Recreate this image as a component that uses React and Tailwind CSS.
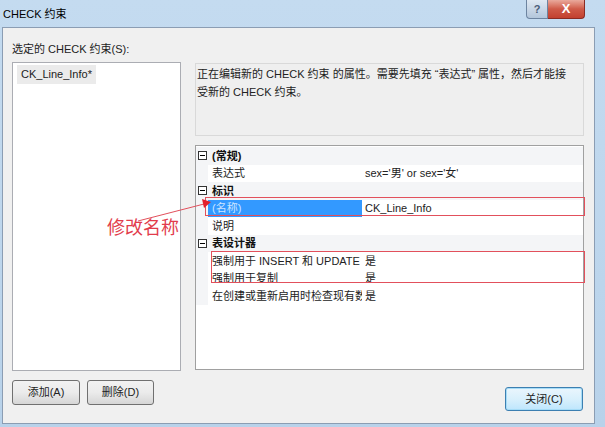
import React from "react";

const font = { fontFamily: '"Liberation Sans", "Noto Sans CJK SC", sans-serif' };

const Minus = () => (
  <svg width="9" height="9" viewBox="0 0 9 9" className="block">
    <rect x="0.5" y="0.5" width="8" height="8" fill="#fff" stroke="#333" />
    <line x1="2" y1="4.5" x2="7" y2="4.5" stroke="#000" />
  </svg>
);

const Category = ({ label }) => (
  <div className="h-[17.5px] flex items-center bg-[#f4f5f7]">
    <div className="w-[12px] flex justify-center pl-[1px]">
      <Minus />
    </div>
    <span className="pl-[4px] font-bold text-[#111]">{label}</span>
  </div>
);

const Prop = ({ name, value, selected }) => (
  <div className="h-[17.5px] flex items-center">
    <div className="w-[12px] h-full bg-[#f4f5f7]" />
    <div
      className={
        "w-[154px] h-full flex items-center pl-[4px] overflow-hidden whitespace-nowrap " +
        (selected ? "bg-[#3399ff] text-[#cfe6ff]" : "text-[#222]")
      }
    >
      {name}
    </div>
    <div className="pl-[3px] whitespace-nowrap text-[#222]">{value}</div>
  </div>
);

const Btn = ({ children, className }) => (
  <button
    className={
      "h-[25px] rounded-[3px] border border-[#707070] bg-gradient-to-b from-[#f2f2f2] via-[#ebebeb] to-[#d6d6d6] text-[11px] text-[#222] " +
      className
    }
  >
    {children}
  </button>
);

export default function App() {
  return (
    <div
      className="w-[605px] h-[427px] bg-gradient-to-b from-[#c4dbf0] to-[#b8d2ea] flex flex-col overflow-hidden relative text-[11px]"
      style={font}
    >
      <div className="h-[27px] shrink-0 flex items-start">
        <span className="pl-[3px] pt-[6px] text-[11px] text-black">CHECK 约束</span>
        <div className="ml-auto mr-[20px] flex">
          <div className="w-[22px] h-[19px] rounded-bl-[4px] border border-[#6d84a0] border-t-0 bg-gradient-to-b from-[#dfe8f2] to-[#b3c6db] flex items-center justify-center text-[11px] font-bold text-[#4a5d78]">
            ?
          </div>
          <div className="w-[37px] h-[19px] rounded-br-[4px] border border-[#8a2b23] border-t-0 border-l-0 bg-gradient-to-b from-[#e9a99c] via-[#cf5a48] to-[#c2402f] flex items-center justify-center text-[13px] font-bold text-white">
            X
          </div>
        </div>
      </div>

      <div className="ml-[2px] mr-[10px] mb-[3px] flex-1 border border-[#8b9db3] bg-[#f0f0f0] flex pl-[9px] pt-[13px]">
        <div className="w-[169px] flex flex-col">
          <div className="h-[16px] leading-[16px] text-[#222]">选定的 CHECK 约束(S):</div>
          <div className="mt-[5px] h-[309px] border border-[#abadb3] bg-white p-[1px]">
            <div className="inline-block bg-[#ebebeb] px-[4px] py-[1px] mt-[1px] ml-[3px] leading-[17px] text-[#222]">
              CK_Line_Info*
            </div>
          </div>
          <div className="mt-[9px] flex gap-[7px]">
            <Btn className="w-[68px]">添加(A)</Btn>
            <Btn className="w-[67px]">删除(D)</Btn>
          </div>
        </div>

        <div className="ml-[14px] w-[389px] flex flex-col pt-[22px]">
          <div className="h-[73px] border border-[#d9d9d9] bg-[#efefef] pl-[1px] pt-[1px] text-[#222] leading-[18px]">
            正在编辑新的 CHECK 约束 的属性。需要先填充 “表达式” 属性，然后才能接
            <br />
            受新的 CHECK 约束。
          </div>
          <div className="mt-[9px] h-[225px] border border-[#a0a0a0] bg-white pt-[1px]">
            <Category label="(常规)" />
            <Prop name="表达式" value="sex='男' or sex='女'" />
            <Category label="标识" />
            <Prop name="(名称)" value="CK_Line_Info" selected />
            <Prop name="说明" value="" />
            <Category label="表设计器" />
            <Prop name="强制用于 INSERT 和 UPDATE" value="是" />
            <Prop name="强制用于复制" value="是" />
            <Prop name="在创建或重新启用时检查现有数据" value="是" />
          </div>
          <div className="mt-[17px] flex justify-end pr-[1px]">
            <button className="w-[78px] h-[24px] rounded-[3px] border border-[#3c7fb1] bg-gradient-to-b from-[#eaf6fd] via-[#d9f0fc] to-[#bee6fd] shadow-[inset_0_0_0_1px_#a6dcf7] text-[11px] text-[#222]">
              关闭(C)
            </button>
          </div>
        </div>
      </div>

      <div className="absolute left-[205px] top-[197px] w-[380px] h-[19px] border border-[#e2505c]" />
      <div className="absolute left-[211px] top-[251px] w-[374px] h-[32px] border border-[#e2505c]" />
      <div className="absolute left-[107px] top-[216px] text-[18px] leading-[24px] text-[#e23c4c]">修改名称</div>
      <svg className="absolute left-0 top-0" width="605" height="427">
        <line x1="138" y1="221" x2="204" y2="204" stroke="#e2505c" strokeWidth="1" />
        <polygon points="211,202 202,199 204,208" fill="#e2202c" />
      </svg>
    </div>
  );
}
